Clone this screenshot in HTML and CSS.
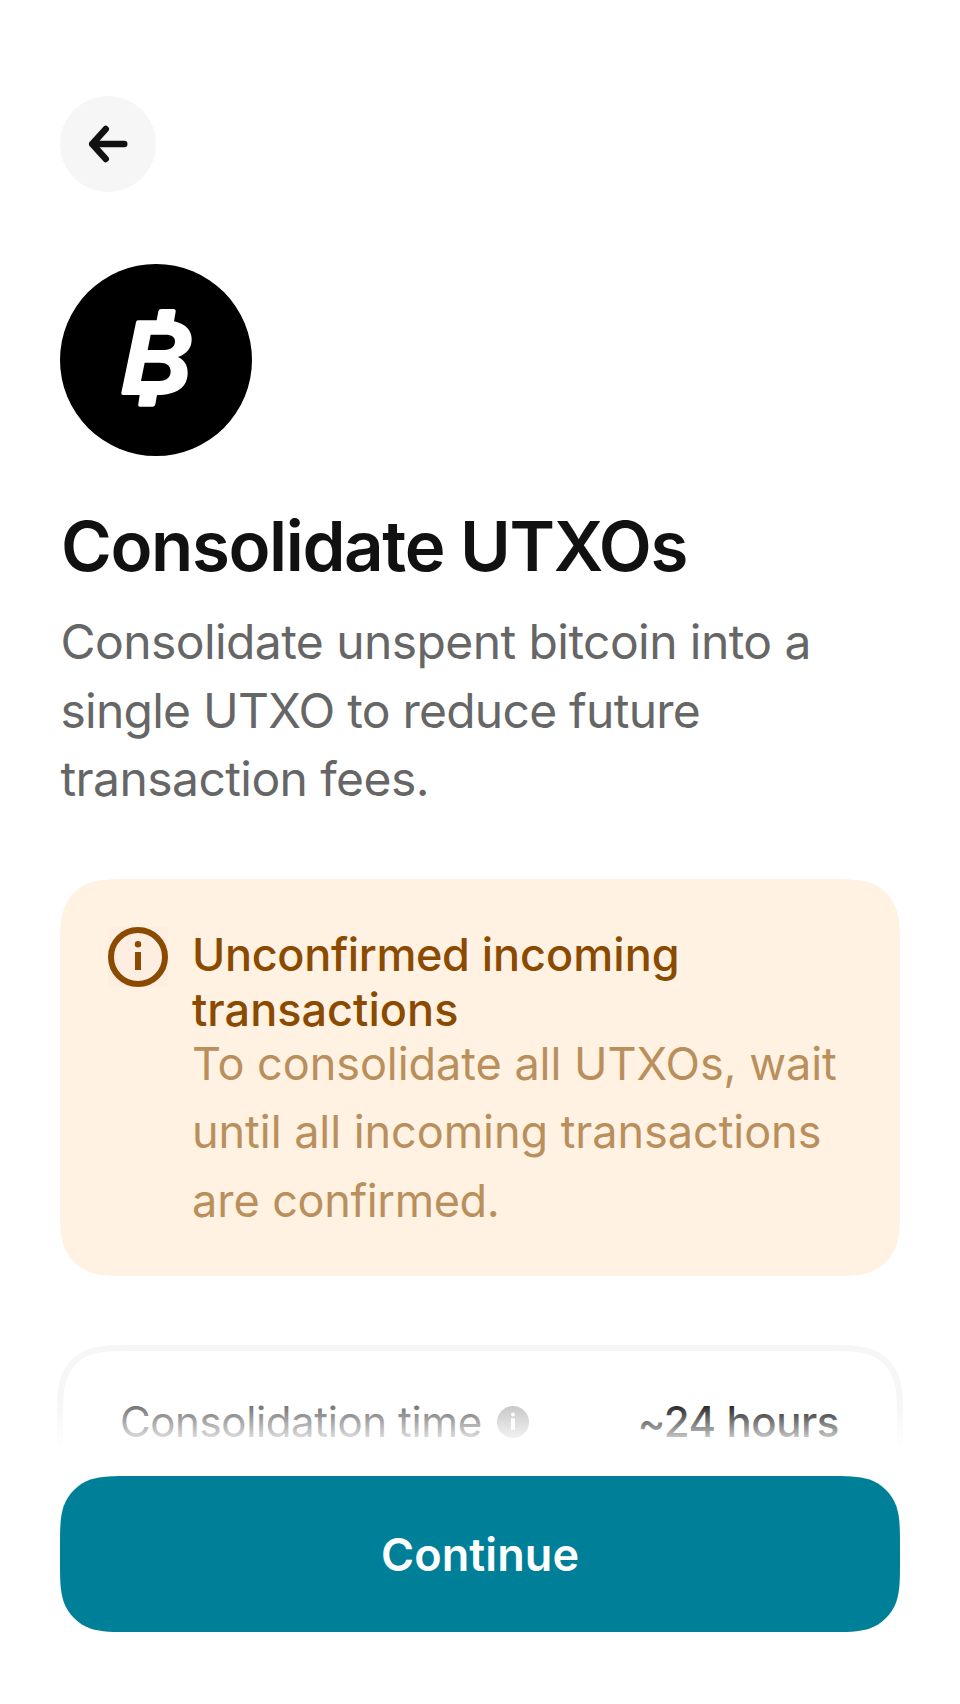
FILE: index.html
```html
<!DOCTYPE html>
<html lang="en">
<head>
<meta charset="utf-8">
<title>Consolidate UTXOs</title>
<link rel="stylesheet" href="styles.css">
</head>
<body>
<div class="screen">
  <main class="content">
    <button class="back" aria-label="Back">
      <svg class="back-icon" viewBox="0 0 96 96" fill="none" stroke="#111" stroke-width="6.400" stroke-linecap="round" stroke-linejoin="round"><path d="M64.300 48H32.200M45.800 33L32.200 48L45.800 63"/></svg>
    </button>
    <svg class="coin" viewBox="30 534 576 576">
      <circle cx="318" cy="822" r="288" fill="#000"/>
      <path fill="#fff" fill-rule="evenodd" d="M264 703H320L325 676Q327 669 334 669H370Q378 669 377 677L372 706C408 714 425 734 425 760C425 786 411 804 384 813C404 822 413 839 413 861C413 904 380 927 321 927L316 955Q315 962 308 962H270Q263 962 265 954L269 927H219Q213 927 214 920L258 709Q259 703 264 703ZM302 746L293 792H343C364 792 375 781 375 766C375 753 365 746 348 746ZM284 830L273 885H328C350 885 362 874 362 856C362 840 350 830 330 830Z"/>
    </svg>
    <h1 class="title">Consolidate UTXOs</h1>
    <p class="lead">Consolidate unspent bitcoin into a <span class="lead-tight">single UTXO to reduce future</span> transaction fees.</p>
    <section class="alert">
      <svg class="alert-icon" viewBox="0 0 60 60"><rect width="60" height="60" fill="#fdeee1"/><circle cx="30" cy="30" r="27" fill="none" stroke="#8a4a00" stroke-width="6"/><circle cx="30" cy="17.300" r="3.200" fill="#8a4a00"/><rect x="27" y="25" width="6" height="18" fill="#8a4a00"/></svg>
      <div class="alert-text">
        <h2 class="alert-title"><span class="alert-tight">Unconfirmed</span> incoming transactions</h2>
        <p class="alert-body">To consolidate all UTXOs, wait until all incoming transactions are <span class="alert-tight">confirmed.</span></p>
      </div>
    </section>
    <section class="card">
      <svg class="card-frame" viewBox="0 0 840 240" fill="none" stroke="#f6f6f6" stroke-width="6"><path d="M0 240V73.380C0 52.250 0 41.680 3.600 30.310C8.110 17.900 17.900 8.110 30.310 3.600C41.680 0 52.250 0 73.380 0H766.620C787.750 0 798.320 0 809.690 3.600C822.100 8.110 831.890 17.900 836.400 30.310C840 41.680 840 52.250 840 73.380V240"/></svg>
      <div class="row">
        <span class="row-label">Consolidation time</span>
        <svg class="row-info" viewBox="0 0 32 32"><circle cx="16" cy="16" r="16" fill="#c2c2c2"/><circle cx="16" cy="8.600" r="2" fill="#fff"/><rect x="14" y="12.300" width="4" height="11.500" fill="#fff"/></svg>
        <span class="row-value">~24 hours</span>
      </div>
    </section>
  </main>
  <footer class="footer">
    <div class="fade"></div>
    <div class="footer-body"><button class="continue">Continue</button></div>
  </footer>
</div>
</body>
</html>
```
FILE: styles.css
```css
* { box-sizing: border-box; margin: 0; padding: 0; }
body { background: #fff; font-family: Inter, sans-serif; color: #111; }
button { border: 0; font: inherit; }
.screen { position: relative; width: 960px; height: 1704px; overflow: hidden; background: #fff; }
.content { display: flex; flex-direction: column; padding: 96px 60px 0; }
.back { width: 96px; height: 96px; border-radius: 50%; background: #f6f6f6; }
.back-icon { display: block; width: 96px; height: 96px; }
.coin { width: 192px; height: 192px; margin-top: 72px; }
.title { margin-top: 48px; padding-left: 1px; font-size: 69px; line-height: 84px; font-weight: 600; letter-spacing: -1.38px; white-space: nowrap; }
.lead { margin-top: 20.4px; padding-left: 0.5px; width: 800px; font-size: 48px; line-height: 68.4px; letter-spacing: -0.58px; color: #666; }
.lead-tight { letter-spacing: -0.76px; }
.alert {
  display: flex; gap: 24px; margin-top: 65.4px; height: 397px; padding: 48px; background: #fff2e3;
  clip-path: path("M0 73.380C0 52.250 0 41.680 3.600 30.310C8.110 17.900 17.900 8.110 30.310 3.600C41.680 0 52.250 0 73.380 0H766.620C787.750 0 798.320 0 809.690 3.600C822.100 8.110 831.890 17.900 836.400 30.310C840 41.680 840 52.250 840 73.380V323.620C840 344.750 840 355.320 836.400 366.690C831.890 379.100 822.100 388.890 809.690 393.400C798.320 397 787.750 397 766.620 397H73.380C52.250 397 41.680 397 30.310 393.400C17.900 388.890 8.110 379.100 3.600 366.690C0 355.320 0 344.750 0 323.620Z");
}
.alert-icon { flex: none; width: 60px; height: 60px; }
.alert-text { flex: 1; }
.alert-title { font-size: 45px; line-height: 55px; font-weight: 500; letter-spacing: 0.03px; color: #8a4a00; }
.alert-body { margin-top: -7.2px; font-size: 45px; line-height: 68.4px; letter-spacing: -0.04px; color: #b98f5c; }
.alert-tight { letter-spacing: -0.34px; }
.card { position: relative; height: 240px; margin-top: 72px; padding: 48px 60px; }
.card-frame { position: absolute; inset: 0; width: 840px; height: 240px; overflow: visible; }
.row { display: flex; align-items: center; height: 52px; font-size: 42px; line-height: 52px; letter-spacing: -0.378px; }
.row-label { color: #666; }
.row-info { width: 32px; height: 32px; margin-left: 15px; }
.row-value { margin-left: auto; padding-right: 1px; font-weight: 500; letter-spacing: -0.45px; }
.footer { position: absolute; left: 0; right: 0; bottom: 0; }
.fade { height: 48px; background: linear-gradient(rgba(255,255,255,0), #fff); }
.footer-body { padding: 27px 60px 72px; background: #fff; }
.continue {
  display: block; width: 840px; height: 156px; background: #008098; color: #fff; font-size: 45px; font-weight: 600; letter-spacing: 0.1px;
  clip-path: path("M0 73.380C0 52.250 0 41.680 3.600 30.310C8.110 17.900 17.900 8.110 30.310 3.600C41.680 0 52.250 0 73.380 0H766.620C787.750 0 798.320 0 809.690 3.600C822.100 8.110 831.890 17.900 836.400 30.310C840 41.680 840 52.250 840 73.380V82.620C840 103.750 840 114.320 836.400 125.690C831.890 138.100 822.100 147.890 809.690 152.400C798.320 156 787.750 156 766.620 156H73.380C52.250 156 41.680 156 30.310 152.400C17.900 147.890 8.110 138.100 3.600 125.690C0 114.320 0 103.750 0 82.620Z");
}
```
